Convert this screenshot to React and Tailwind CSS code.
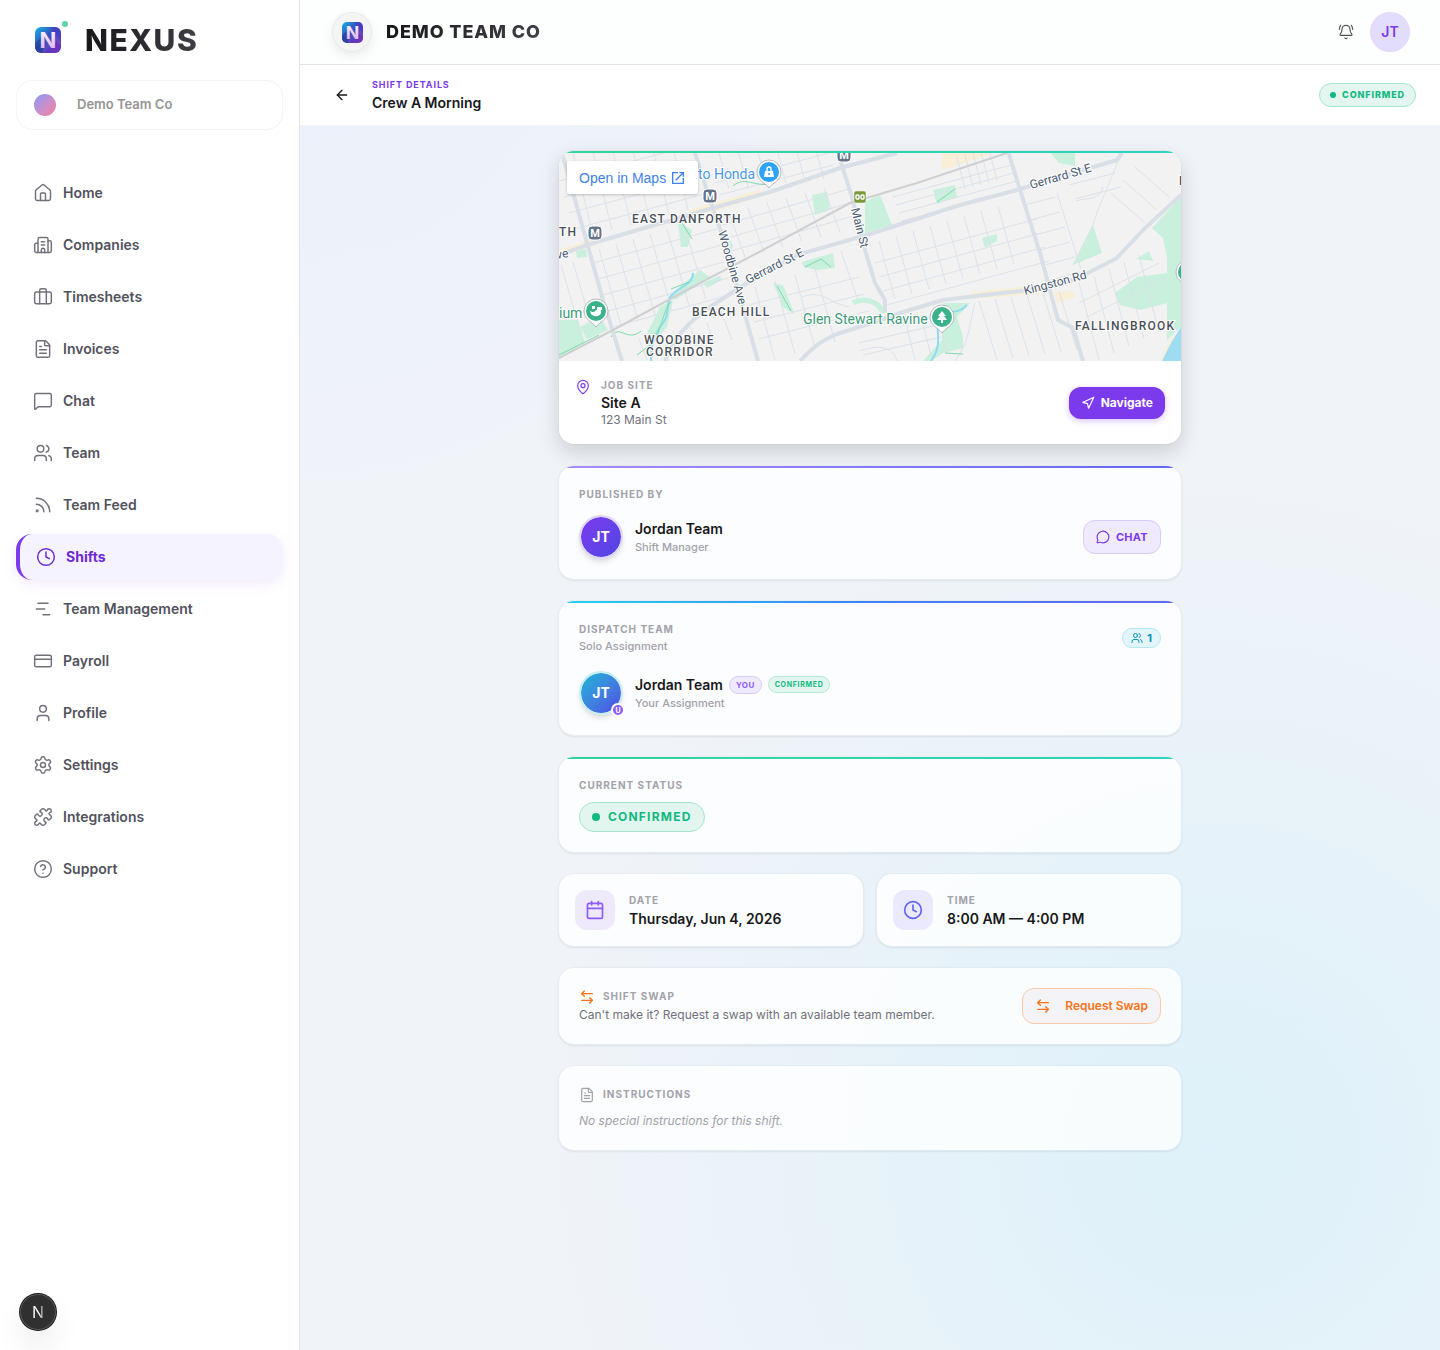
import React from "react";
import {
  ArrowLeft,
  ArrowLeftRight,
  BellRing,
  Briefcase,
  Building2,
  Calendar,
  ChartNoAxesGantt,
  CircleQuestionMark,
  Clock,
  CreditCard,
  FileText,
  House,
  MapPin,
  MessageCircle,
  MessageSquare,
  Navigation,
  Puzzle,
  Rss,
  Settings,
  User,
  Users,
} from "lucide-react";

const navItems = [
  { label: "Home", icon: House },
  { label: "Companies", icon: Building2 },
  { label: "Timesheets", icon: Briefcase },
  { label: "Invoices", icon: FileText },
  { label: "Chat", icon: MessageSquare },
  { label: "Team", icon: Users },
  { label: "Team Feed", icon: Rss },
  { label: "Shifts", icon: Clock, active: true },
  { label: "Team Management", icon: ChartNoAxesGantt },
  { label: "Payroll", icon: CreditCard },
  { label: "Profile", icon: User },
  { label: "Settings", icon: Settings },
  { label: "Integrations", icon: Puzzle },
  { label: "Support", icon: CircleQuestionMark },
];

const NexusLogo = ({ className, id }) => (
  <svg viewBox="0 0 26 26" className={className} aria-hidden="true">
    <defs>
      <linearGradient id={`${id}-bg`} x1="0" y1="0" x2="1" y2="1">
        <stop offset="0" stopColor="#12b5ea" />
        <stop offset="0.45" stopColor="#3b4bb8" />
        <stop offset="1" stopColor="#8b45c4" />
      </linearGradient>
      <linearGradient id={`${id}-n`} x1="0" y1="0" x2="0" y2="1">
        <stop offset="0" stopColor="#ffffff" />
        <stop offset="1" stopColor="#dca6ee" />
      </linearGradient>
    </defs>
    <rect width="26" height="26" rx="6" fill={`url(#${id}-bg)`} />
    <path d="M0 16 8 9v17H6a6 6 0 0 1-6-6z" fill="#1e3a8a" opacity="0.55" />
    <path d="M10 24 22 15l4 4v1a6 6 0 0 1-6 6h-9z" fill="#5b21b6" opacity="0.45" />
    <path d="M15 0h5a6 6 0 0 1 6 6v8z" fill="#4338ca" opacity="0.6" />
    <text
      x="13"
      y="21"
      textAnchor="middle"
      fontFamily="Inter, sans-serif"
      fontSize="22"
      fontWeight="700"
      fill={`url(#${id}-n)`}
    >
      N
    </text>
  </svg>
);

// [x1, y1, x2, y2, count, dx, dy] - runs of parallel side streets
const sideStreets = [
  [14, 0, 34, 82, 6, 19, -5],
  [0, 28, 134, -8, 4, 5, 16],
  [40, 96, 62, 172, 6, 17, -5],
  [34, 110, 158, 76, 5, 5, 16],
  [2, 112, 22, 180, 2, 12, -3],
  [156, 30, 270, 0, 2, 4, 12],
  [160, 0, 170, 36, 6, 19, -2],
  [170, 60, 186, 104, 6, 19, -5],
  [164, 72, 290, 36, 3, 4, 13],
  [196, 134, 216, 207, 4, 20, -6],
  [190, 152, 300, 124, 3, 5, 17],
  [282, 98, 300, 150, 1, 0, 0],
  [80, 186, 88, 207, 6, 17, -4],
  [334, 44, 452, 12, 4, 3, 8],
  [320, 88, 336, 146, 8, 17, -5],
  [316, 110, 478, 66, 4, 4, 14],
  [346, 166, 356, 207, 3, 16, -4],
  [398, 4, 406, 36, 5, 8, -2],
  [420, 148, 438, 207, 6, 16, -2],
  [300, 190, 378, 172, 2, 4, 12],
  [466, 52, 496, 44, 6, 5, 15],
  [498, 40, 522, 116, 1, 0, 0],
  [520, 130, 540, 207, 5, 15, -7],
  [510, 32, 556, 20, 2, 6, 14],
  [520, 150, 600, 110, 2, 8, 14],
  [552, 40, 586, 70, 3, 12, -13],
];

const mainRoads = [
  "M0 102 31 91 154 55 211 39 281 15 338 0",
  "M136 0 151 47 164 84 181 144 199 208",
  "M3 0 28 90 44 147 63 208",
  "M106 208C114 186 130 168 151 154L188 130 238 102 311 81 401 52 458 37 484 29 558 7 563 0",
  "M279 0 293 44 303 87 316 130 326 147V160",
  "M241 208C254 194 262 188 278 181L319 168 341 160 384 147 434 141 488 135 521 124 558 105 584 77 622 42",
  "M449 -2 461 37 481 100 499 167 514 175 524 208",
];

const parks = [
  "M119 69 133 77 129 94 122 94z",
  "M253 42 268 39 271 57 256 62z",
  "M306 49 321 42 333 72 306 80z",
  "M243 109 274 100 276 115 258 117 245 114z",
  "M214 130 224 132 236 162 224 154z",
  "M111 142 141 117 151 124 116 147z",
  "M144 130 161 123 163 127 148 135z",
  "M101 154 114 147 108 174 94 190 88 180z",
  "M0 167H19L26 190 0 205z",
  "M21 174 41 164 49 177 28 186z",
  "M17 98 27 96 28 104 18 105z",
  "M169 84 174 92 172 100z",
  "M374 37 396 32 398 44 378 51z",
  "M423 85 438 81V88L426 95z",
  "M534 72 543 100 514 112z",
  "M490 -2H516V13L500 10z",
  "M622 44 593 75 604 85 608 104V120L578 124 556 140 561 152 581 157 608 150V187L622 174z",
  "M384 150H411L398 164 404 184V195L384 200 372 208H364L383 187z",
  "M577 106 590 98 594 108z",
];

const MapPinMarker = ({ x, y, color, children }) => (
  <g transform={`translate(${x} ${y})`}>
    <path
      d="M0 16C-3 11-12 9-12 0a12 12 0 0 1 24 0C12 9 3 11 0 16z"
      fill="#ffffff"
      stroke="#a3a9b0"
      strokeWidth="0.8"
    />
    <circle r="10" fill={color} />
    {children}
  </g>
);

const MetroMarker = ({ x, y }) => (
  <g transform={`translate(${x} ${y})`}>
    <rect x="-7" y="-7" width="14" height="14" rx="4" fill="#64748b" stroke="#ffffff" />
    <text y="4" textAnchor="middle" fontSize="11" fontWeight="700" fill="#ffffff">
      M
    </text>
  </g>
);

const SiteMap = () => (
  <svg
    viewBox="0 -2 622 210"
    preserveAspectRatio="xMidYMid slice"
    className="block h-[210px] w-full bg-[#f2f2f3]"
    fontFamily="Roboto, sans-serif"
    role="img"
    aria-label="Map of the job site"
  >
    <g fill="#f9eed6">
      <path d="M0 97 34 86 38 92 0 104z" />
      <path d="M127 58 200 37 204 43 150 60z" />
      <path d="M383 -2H441L383 17z" />
      <path d="M412 139 480 132V141L412 146z" />
      <path d="M494 139 514 138 517 144 498 150z" />
      <path d="M608 192 622 176V208H602z" />
    </g>
    <g fill="#c9f0dc">
      {parks.map((d) => (
        <path key={d} d={d} />
      ))}
    </g>
    <path d="M622 174 612 190 603 208H622z" fill="#9edcf1" />
    <g fill="none" stroke="#dbe2e9" strokeWidth="1">
      {sideStreets.map(([x1, y1, x2, y2, count, dx, dy]) =>
        Array.from({ length: count }, (_, i) => (
          <line
            key={`${x1}-${y1}-${i}`}
            x1={x1 + i * dx}
            y1={y1 + i * dy}
            x2={x2 + i * dx}
            y2={y2 + i * dy}
          />
        ))
      )}
      <path d="M560 4C552 30 540 50 534 72L514 112" />
      <path d="M301 198C320 190 336 196 338 208" />
      <path d="M416 150C410 170 412 186 396 208" />
      <path d="M243 144C262 136 270 150 290 154" />
      <path d="M517 48C530 44 540 48 544 34" />
    </g>
    <path d="M294 150C304 144 320 148 324 160" fill="none" stroke="#c9f0dc" strokeWidth="5" />
    <path
      d="M134 120C134 132 122 132 112 143 106 150 112 160 104 170 98 178 92 186 92 208"
      fill="none"
      stroke="#8fdcf0"
      strokeWidth="2"
    />
    <path d="M408 152C400 162 388 156 381 164S386 190 372 208" fill="none" stroke="#8fdcf0" strokeWidth="2" />
    <g fill="none" stroke="#7fd9ab" strokeWidth="1">
      <path d="M123 70 133 86M112 136 130 129M218 133 232 158M378 49 396 36" />
      <path d="M52 184C60 170 68 190 82 178M94 190 78 202M386 200 404 201" />
      <path d="M174 33C186 22 200 36 212 30M0 202 40 182" />
      <path d="M96 188C104 168 104 160 112 148M246 114 262 106 272 114" />
    </g>
    <g fill="none" stroke="#d8dfe7" strokeWidth="4" strokeLinejoin="round">
      {mainRoads.map((d) => (
        <path key={d} d={d} />
      ))}
    </g>
    <path
      d="M0 205 54 177 141 130 204 97 291 50 358 30 448 0"
      fill="none"
      stroke="#cfd0d2"
      strokeWidth="2"
    />

    <g
      fill="#4b5057"
      stroke="#ffffff"
      strokeWidth="2"
      paintOrder="stroke"
      fontSize="12"
      fontWeight="500"
      letterSpacing="1.2"
    >
      <text x="73" y="70">EAST DANFORTH</text>
      <text x="0" y="83">TH</text>
      <text x="133" y="163">BEACH HILL</text>
      <text x="85" y="191">WOODBINE</text>
      <text x="87" y="203">CORRIDOR</text>
      <text x="516" y="177">FALLINGBROOK</text>
      <text x="620" y="32">E</text>
    </g>
    <g fill="#4a5a70" stroke="#ffffff" strokeWidth="2" paintOrder="stroke" fontSize="12">
      <text transform="translate(-2 106) rotate(-10)">ve</text>
      <text transform="translate(159 79) rotate(74)">Woodbine Ave</text>
      <text transform="translate(189 131) rotate(-27)">Gerrard St E</text>
      <text transform="translate(472 36) rotate(-16)">Gerrard St E</text>
      <text transform="translate(466 142) rotate(-15)">Kingston Rd</text>
      <text transform="translate(292 56) rotate(76)">Main St</text>
    </g>
    <g stroke="#ffffff" strokeWidth="2" paintOrder="stroke" fontSize="14">
      <text x="139" y="26" fill="#4a97ea">to Honda</text>
      <text x="0" y="165" fill="#3d9a78">ium</text>
      <text x="244" y="171" fill="#3d9a78">Glen Stewart Ravine</text>
    </g>

    <MetroMarker x={151} y={43} />
    <MetroMarker x={36} y={80} />
    <MetroMarker x={285} y={2} />
    <g transform="translate(301 44)">
      <rect x="-6" y="-6" width="12" height="12" rx="2" fill="#7a9a3a" stroke="#ffffff" strokeWidth="0.5" />
      <rect x="-4" y="-2" width="3" height="4" rx="1" fill="none" stroke="#ffffff" strokeWidth="1.4" />
      <rect x="1" y="-2" width="3" height="4" rx="1" fill="none" stroke="#ffffff" strokeWidth="1.4" />
    </g>
    <MapPinMarker x={210} y={19} color="#2ea3fb">
      <path d="M-4-1h8l1 6H-5z" fill="#ffffff" />
      <path d="M-2-1v-2a2 2 0 0 1 4 0v2" fill="none" stroke="#ffffff" strokeWidth="1.4" />
      <circle cy="2" r="1" fill="#2ea3fb" />
    </MapPinMarker>
    <MapPinMarker x={37} y={158} color="#3bb28a">
      <path d="M-6 0c3 2 5 1 6-1h5v3c-1 4-8 4-10 1z" fill="#ffffff" />
      <path d="M-4-5h3v3h-3zM1-4h5v3H1z" fill="#ffffff" />
    </MapPinMarker>
    <MapPinMarker x={383} y={164} color="#3bb28a">
      <path d="M0-6 4-1H2l3 4H1v3h-2V3h-4l3-4h-2z" fill="#ffffff" />
    </MapPinMarker>
    <MapPinMarker x={629} y={119} color="#3bb28a" />
  </svg>
);

const Card = ({ accent, className = "p-5", children }) => (
  <section
    className={`relative overflow-hidden rounded-2xl border border-zinc-500/5 bg-white/80 bg-clip-padding shadow-[0_1px_2px_rgba(0,0,0,0.08)] ${className}`}
  >
    {accent && <div className={`absolute inset-x-0 top-0 h-0.5 ${accent}`} />}
    {children}
  </section>
);

const Label = ({ className = "", children }) => (
  <h2 className={`text-[10px] leading-[17px] font-bold tracking-widest text-[#a1a1aa] uppercase ${className}`}>
    {children}
  </h2>
);

const InfoCard = ({ icon: Icon, label, value, tone }) => (
  <Card className="flex items-center gap-3.5 p-4">
    <div className={`flex size-10 items-center justify-center rounded-xl ${tone}`}>
      <Icon size={20} strokeWidth={2} />
    </div>
    <div>
      <Label>{label}</Label>
      <p className="text-sm font-semibold text-zinc-900">{value}</p>
    </div>
  </Card>
);

const Sidebar = () => (
  <aside className="flex w-[300px] shrink-0 flex-col border-r border-zinc-200 bg-white px-4">
    <div className="flex h-20 items-center pl-[19px]">
      <div className="relative">
        <NexusLogo id="side" className="size-[26px]" />
        <span className="absolute -top-1.5 -right-[7px] size-1.5 rounded-full bg-[#5fd0a5]" />
      </div>
      <span className="ml-6 bg-linear-to-r from-zinc-900 to-zinc-700 bg-clip-text text-[30px] leading-9 font-extrabold tracking-wider text-transparent">
        NEXUS
      </span>
    </div>
    <button
      type="button"
      className="flex h-[50px] w-[267px] items-center gap-[21px] rounded-2xl border border-zinc-100 px-[17px] text-[13px] font-semibold text-[#949494]"
    >
      <span className="size-[22px] rounded-full bg-linear-to-br from-[#8b94fa] to-[#f7819a]" />
      Demo Team Co
    </button>
    <nav className="mt-10 flex flex-col gap-1.5">
      {navItems.map(({ label, icon: Icon, active }) => (
        <a
          key={label}
          href="#"
          className={`flex h-[46px] items-center gap-2.5 rounded-2xl px-4 text-sm ${
            active
              ? "border-l-4 border-[#7c3aed] bg-[#f5f3ff] font-bold text-[#6d28d9] shadow-[0_4px_14px_rgba(124,58,237,0.1)]"
              : "border-l border-transparent font-semibold text-zinc-600"
          }`}
        >
          <Icon size={20} strokeWidth={1.75} className={active ? "" : "text-zinc-500"} />
          {label}
        </a>
      ))}
    </nav>
  </aside>
);

const App = () => {
  return (
    <div className="flex min-h-screen bg-white font-['Inter',sans-serif] text-zinc-900 antialiased">
      <Sidebar />

      <div className="flex min-w-0 flex-1 flex-col bg-[#f0f3f8] bg-[radial-gradient(circle_at_80%_85%,rgba(204,240,252,0.5),transparent_680px),radial-gradient(circle_at_0%_0%,rgba(230,238,255,0.5),transparent_560px)]">
        <header className="flex h-[65px] items-center border-b border-zinc-200 bg-[#fdfefe] px-[30px]">
          <div className="ml-0.5 flex size-10 items-center justify-center rounded-full border border-zinc-200/60 bg-zinc-100 shadow-[0_4px_12px_rgba(0,0,0,0.08)]">
            <NexusLogo id="top" className="size-[21px]" />
          </div>
          <span className="ml-3.5 bg-linear-to-r from-zinc-900 to-zinc-700 bg-clip-text text-lg font-extrabold tracking-wider text-transparent">
            DEMO TEAM CO
          </span>
          <div className="ml-auto flex items-center gap-4">
            <button type="button" aria-label="Notifications" className="text-zinc-600">
              <BellRing size={16} strokeWidth={1.75} />
            </button>
            <button
              type="button"
              className="flex size-10 items-center justify-center rounded-full border-2 border-[#e6dafc] bg-[#e2dcfd] text-sm font-semibold text-[#7c3aed]"
            >
              JT
            </button>
          </div>
        </header>

        <div className="flex h-[61px] items-center border-b border-zinc-100 bg-white px-6">
          <button type="button" aria-label="Back" className="flex size-9 items-center justify-center">
            <ArrowLeft size={16} />
          </button>
          <div className="ml-3">
            <p className="text-[9px] leading-4 font-bold tracking-widest text-[#7c3aed]">SHIFT DETAILS</p>
            <h1 className="text-sm font-semibold">Crew A Morning</h1>
          </div>
          <span className="ml-auto flex h-6 items-center gap-1.5 rounded-full border border-[#a5e5cf] bg-[#e4f6f0] px-2.5 text-[9px] font-extrabold tracking-widest text-[#10b981]">
            <span className="size-1.5 rounded-full bg-[#10b981]" />
            CONFIRMED
          </span>
        </div>

        <main className="mx-auto flex w-full max-w-2xl flex-col gap-5 p-6">
          <section className="relative overflow-hidden rounded-2xl border border-zinc-500/5 bg-white bg-clip-padding shadow-[0_8px_20px_rgba(0,0,0,0.14)]">
            <div className="absolute inset-x-0 top-0 h-0.5 bg-linear-to-r from-[#34d399] to-[#2dd4bf]" />
            <SiteMap />
            <a
              href="#"
              className="absolute top-2.5 left-2 flex h-[33px] items-center gap-1 rounded-xs bg-white px-3 font-['Liberation_Sans',sans-serif] text-sm text-[#3f82e8] shadow-[0_1px_3px_rgba(0,0,0,0.2)]"
            >
              Open in Maps
              <svg viewBox="0 0 24 24" className="size-4" fill="currentColor" aria-hidden="true">
                <path d="M19 19H5V5h7V3H3v18h18v-9h-2v7zM14 3v2h3.600l-9.800 9.800 1.400 1.400L19 6.400V10h2V3h-7z" />
              </svg>
            </a>
            <div className="flex items-center justify-between p-4">
              <div className="flex items-start gap-2.5">
                <MapPin size={16} strokeWidth={1.75} className="mt-0.5 text-[#7c3aed]" />
                <div>
                  <h2 className="text-[10px] leading-4 font-bold tracking-widest text-[#a1a1aa]">JOB SITE</h2>
                  <p className="text-sm leading-[19px] font-semibold">Site A</p>
                  <p className="text-xs text-zinc-500">123 Main St</p>
                </div>
              </div>
              <button
                type="button"
                className="flex h-8 items-center gap-1.5 rounded-xl bg-[#7c3aed] px-3 text-xs font-bold text-white shadow-[0_2px_6px_rgba(124,58,237,0.3)]"
              >
                <Navigation size={14} />
                Navigate
              </button>
            </div>
          </section>

          <Card accent="bg-linear-to-r from-[#a78bfa] to-[#6366f1]">
            <Label className="mb-3">Published by</Label>
            <div className="flex items-center gap-3">
              <div className="flex size-11 items-center justify-center rounded-full border-2 border-[#e0d6fb] bg-linear-to-br from-[#7c3aed] to-[#4f46e5] bg-clip-padding text-sm font-bold text-white shadow-md">
                JT
              </div>
              <div>
                <p className="text-sm font-semibold">Jordan Team</p>
                <p className="text-[11px] leading-[17px] font-medium text-[#a1a1aa]">Shift Manager</p>
              </div>
              <button
                type="button"
                className="ml-auto flex h-[34px] items-center gap-1.5 rounded-xl border border-[#d9cbfa] bg-[#efeafd] px-3 text-[11px] font-bold tracking-wide text-[#7c3aed]"
              >
                <MessageCircle size={14} />
                CHAT
              </button>
            </div>
          </Card>

          <Card accent="bg-linear-to-r from-[#22d3ee] via-[#3b82f6] to-[#6366f1]">
            <div className="mb-4 flex items-center justify-between">
              <div>
                <Label>Dispatch team</Label>
                <p className="text-[11px] leading-[17px] font-medium text-[#a1a1aa]">Solo Assignment</p>
              </div>
              <span className="flex h-5 items-center gap-1 rounded-full border border-[#b5e8ef] bg-[#e2f5fa] px-2 text-[11px] font-bold text-[#0891b2]">
                <Users size={12} />1
              </span>
            </div>
            <div className="flex items-center gap-3">
              <div className="relative flex size-11 items-center justify-center rounded-full border-2 border-[#c6eef5] bg-linear-to-br from-[#06b6d4] to-[#4f46e5] bg-clip-padding text-sm font-bold text-white shadow-md">
                JT
                <span className="absolute -right-1 -bottom-1 flex size-3.5 items-center justify-center rounded-full border-2 border-white bg-[#8b5cf6] text-[7px] leading-none font-bold">
                  U
                </span>
              </div>
              <div>
                <div className="flex h-5 items-center gap-1.5">
                  <p className="text-sm font-semibold">Jordan Team</p>
                  <span className="rounded-full border border-[#d9cbfa] bg-[#efeafd] px-1.5 text-[8px] leading-4 font-bold tracking-wider text-[#8b5cf6]">
                    YOU
                  </span>
                  <span className="rounded-full border border-[#b4e9d7] bg-[#e2f5ef] px-1.5 text-[7px] leading-[15px] font-bold tracking-widest text-[#10b981]">
                    CONFIRMED
                  </span>
                </div>
                <p className="text-[11px] leading-[17px] font-medium text-[#a1a1aa]">Your Assignment</p>
              </div>
            </div>
          </Card>

          <Card accent="bg-linear-to-r from-[#34d399] to-[#2dd4bf]">
            <Label className="mb-2">Current status</Label>
            <span className="flex h-[30px] w-fit items-center gap-2 rounded-full border border-[#a5e5cf] bg-[#e2f5ef] px-3 text-xs font-bold tracking-widest text-[#10b981]">
              <span className="size-2 rounded-full bg-[#10b981]" />
              CONFIRMED
            </span>
          </Card>

          <div className="grid grid-cols-2 gap-3">
            <InfoCard
              icon={Calendar}
              label="Date"
              value="Thursday, Jun 4, 2026"
              tone="bg-[#efe9fc] text-[#8b5cf6]"
            />
            <InfoCard
              icon={Clock}
              label="Time"
              value="8:00 AM — 4:00 PM"
              tone="bg-[#eae9fd] text-[#6366f1]"
            />
          </div>

          <Card className="flex items-center justify-between p-5">
            <div>
              <div className="flex items-center gap-2">
                <ArrowLeftRight size={16} className="text-[#f97316]" />
                <Label>Shift swap</Label>
              </div>
              <p className="text-xs leading-[19px] text-zinc-500">
                Can't make it? Request a swap with an available team member.
              </p>
            </div>
            <button
              type="button"
              className="flex h-9 items-center gap-3.5 rounded-xl border border-[#fbc9a5] bg-[#f4f4f8] px-3 text-xs font-semibold text-[#f97316]"
            >
              <ArrowLeftRight size={16} />
              Request Swap
            </button>
          </Card>

          <Card>
            <div className="flex items-center gap-2">
              <FileText size={16} strokeWidth={1.75} className="text-[#a1a1aa]" />
              <Label>Instructions</Label>
            </div>
            <p className="mt-2 text-xs leading-[19px] text-[#a1a1aa] italic">
              No special instructions for this shift.
            </p>
          </Card>
        </main>
      </div>

      <button
        type="button"
        aria-label="Open developer tools"
        className="fixed bottom-5 left-5 flex size-9 items-center justify-center rounded-full bg-[#303030] text-base text-white shadow-[0_0_0_1px_#171717,inset_0_0_0_1px_#555555,0_16px_32px_-8px_rgba(0,0,0,0.24)]"
      >
        <span className="bg-linear-to-r from-white from-60% to-zinc-500 bg-clip-text text-transparent">N</span>
      </button>
    </div>
  );
};

export default App;
